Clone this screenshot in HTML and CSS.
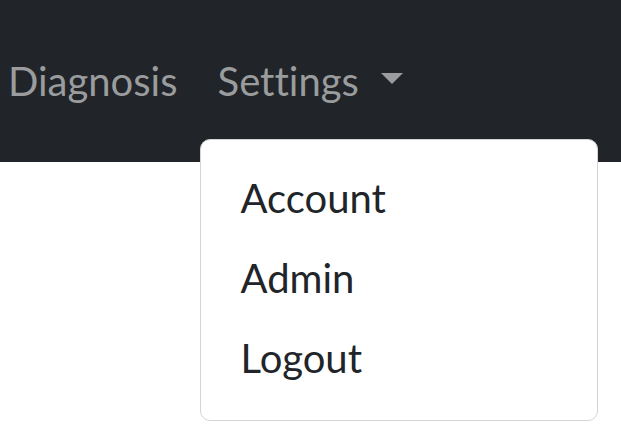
FILE: index.html
```html
<!DOCTYPE html>
<html lang="en">
<head>
<meta charset="utf-8">
<title>Navbar</title>
<link rel="stylesheet" href="styles.css">
</head>
<body>
<div class="page">
  <nav class="navbar">
    <ul class="nav">
      <li class="nav-item"><a class="nav-link" href="#">Diagnosis</a></li>
      <li class="nav-item dropdown">
        <a class="nav-link dropdown-toggle" href="#">Settings<span class="caret"></span></a>
        <ul class="dropdown-menu">
          <li><a class="dropdown-item" href="#">Account</a></li>
          <li><a class="dropdown-item" href="#">Admin</a></li>
          <li><a class="dropdown-item" href="#">Logout</a></li>
        </ul>
      </li>
    </ul>
  </nav>
  <main class="content"></main>
</div>
</body>
</html>
```
FILE: styles.css
```css
* { box-sizing: border-box; }
html, body {
  margin: 0;
  padding: 0;
  background: #fff;
  min-height: 100%;
  overflow: visible;
}
body {
  font-family: Lato, "Open Sans", sans-serif;
  font-size: 40px;
  line-height: 60px;
  color: #212529;
  font-variant-ligatures: none;
  font-feature-settings: "liga" 0, "clig" 0;
}
.page {
  min-height: 446px;
  display: flex;
  flex-direction: column;
}
.navbar {
  position: relative;
  z-index: 10;
  background: #212529;
  height: 162px;
  flex: none;
  padding: 31px 0 0 8px;
}
.content {
  flex: 1;
  background: #fff;
}
.nav {
  list-style: none;
  margin: 0;
  padding: 0;
  display: flex;
  gap: 40px;
}
.nav-item { position: relative; }
.nav-link {
  display: flex;
  align-items: center;
  padding: 20px 0;
  color: #9a9c9e;
  text-decoration: none;
}
.caret {
  display: inline-block;
  width: 0;
  height: 0;
  margin-left: 22px;
  margin-top: -5px;
  border-top: 11px solid #9a9c9e;
  border-left: 11px solid transparent;
  border-right: 11px solid transparent;
}
.dropdown-menu {
  position: absolute;
  top: calc(100% + 8px);
  left: -18px;
  z-index: 20;
  width: 398px;
  list-style: none;
  margin: 0;
  padding: 18px 0 22px;
  background: #fff;
  border: 1px solid #d4d4d4;
  border-radius: 10px;
}
.dropdown-item {
  display: block;
  padding: 10px 40px;
  color: #212529;
  text-decoration: none;
}
```
